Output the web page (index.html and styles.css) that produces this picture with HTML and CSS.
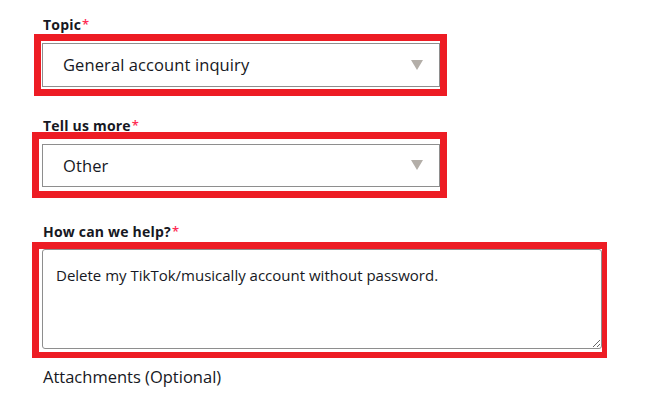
FILE: index.html
```html
<!DOCTYPE html>
<html lang="en">
<head>
<meta charset="utf-8">
<title>Contact form</title>
<link rel="stylesheet" href="styles.css">
</head>
<body>
<form class="form">
  <div class="label label-topic">Topic<span class="req">*</span></div>
  <div class="mark mark-topic">
    <div class="select">
      <span class="select-value">General account inquiry</span>
      <svg class="caret" width="12" height="10" viewBox="0 0 12 10"><path d="M0 0H12L6 10Z"/></svg>
    </div>
  </div>

  <div class="label label-more">Tell us more<span class="req">*</span></div>
  <div class="mark mark-more">
    <div class="select">
      <span class="select-value">Other</span>
      <svg class="caret" width="12" height="10" viewBox="0 0 12 10"><path d="M0 0H12L6 10Z"/></svg>
    </div>
  </div>

  <div class="label label-help">How can we help?<span class="req">*</span></div>
  <div class="mark mark-help">
    <textarea class="textarea" readonly>Delete my TikTok/musically account without password.</textarea>
  </div>

  <div class="attachments">Attachments (Optional)</div>
</form>
</body>
</html>
```

FILE: styles.css
```css
html, body {
  margin: 0;
  padding: 0;
  background: #ffffff;
}

body {
  font-family: "Open Sans", Lato, Arial, sans-serif;
  color: #161823;
}

.form {
  padding: 16px 0 0 32px;
}

.label {
  font-size: 14px;
  font-weight: 700;
  line-height: 17px;
  letter-spacing: 0.2px;
  margin-left: 11px;
  color: #161823;
}

.req {
  color: #fe2c55;
  margin-left: 1px;
  font-size: 13px;
  font-weight: 600;
  letter-spacing: 0;
  vertical-align: 1px;
}

.label-topic { margin-bottom: 1px; }
.label-more { margin-top: 21px; margin-bottom: -2px; }
.label-help { margin-top: 25px; margin-bottom: 2px; }

.mark {
  box-sizing: border-box;
  border: 7px solid #ed1c24;
}

.mark-topic {
  width: 413px;
  margin-left: 2px;
  padding: 2px 0 2px 1px;
}

.mark-more {
  width: 415px;
  padding: 5px 0 4px 3px;
}

.mark-help {
  width: 575px;
  border-width: 7px 5px 6px 7px;
  padding: 0 0 3px 3px;
}

.select {
  box-sizing: border-box;
  width: 398px;
  height: 44px;
  border: 1px solid #8e8e8e;
  display: flex;
  align-items: center;
  justify-content: space-between;
  padding: 0 16px 1px 20px;
}

.mark-more .select {
  height: 43px;
}

.select-value {
  font-size: 16.5px;
  letter-spacing: 0.1px;
  color: #161823;
}

.caret {
  fill: #b3aea8;
  display: block;
}

.textarea {
  display: block;
  box-sizing: border-box;
  width: 560px;
  height: 100px;
  margin: 0;
  border: 1px solid #8e8e8e;
  border-radius: 3px;
  padding: 16px 13px 0 13px;
  font-family: "Open Sans", Lato, Arial, sans-serif;
  font-size: 15px;
  line-height: 18px;
  color: #161823;
  background: #ffffff;
  outline: none;
}

.attachments {
  margin: 9px 0 0 11px;
  font-size: 16.5px;
  line-height: 20px;
  color: #161823;
}
```
